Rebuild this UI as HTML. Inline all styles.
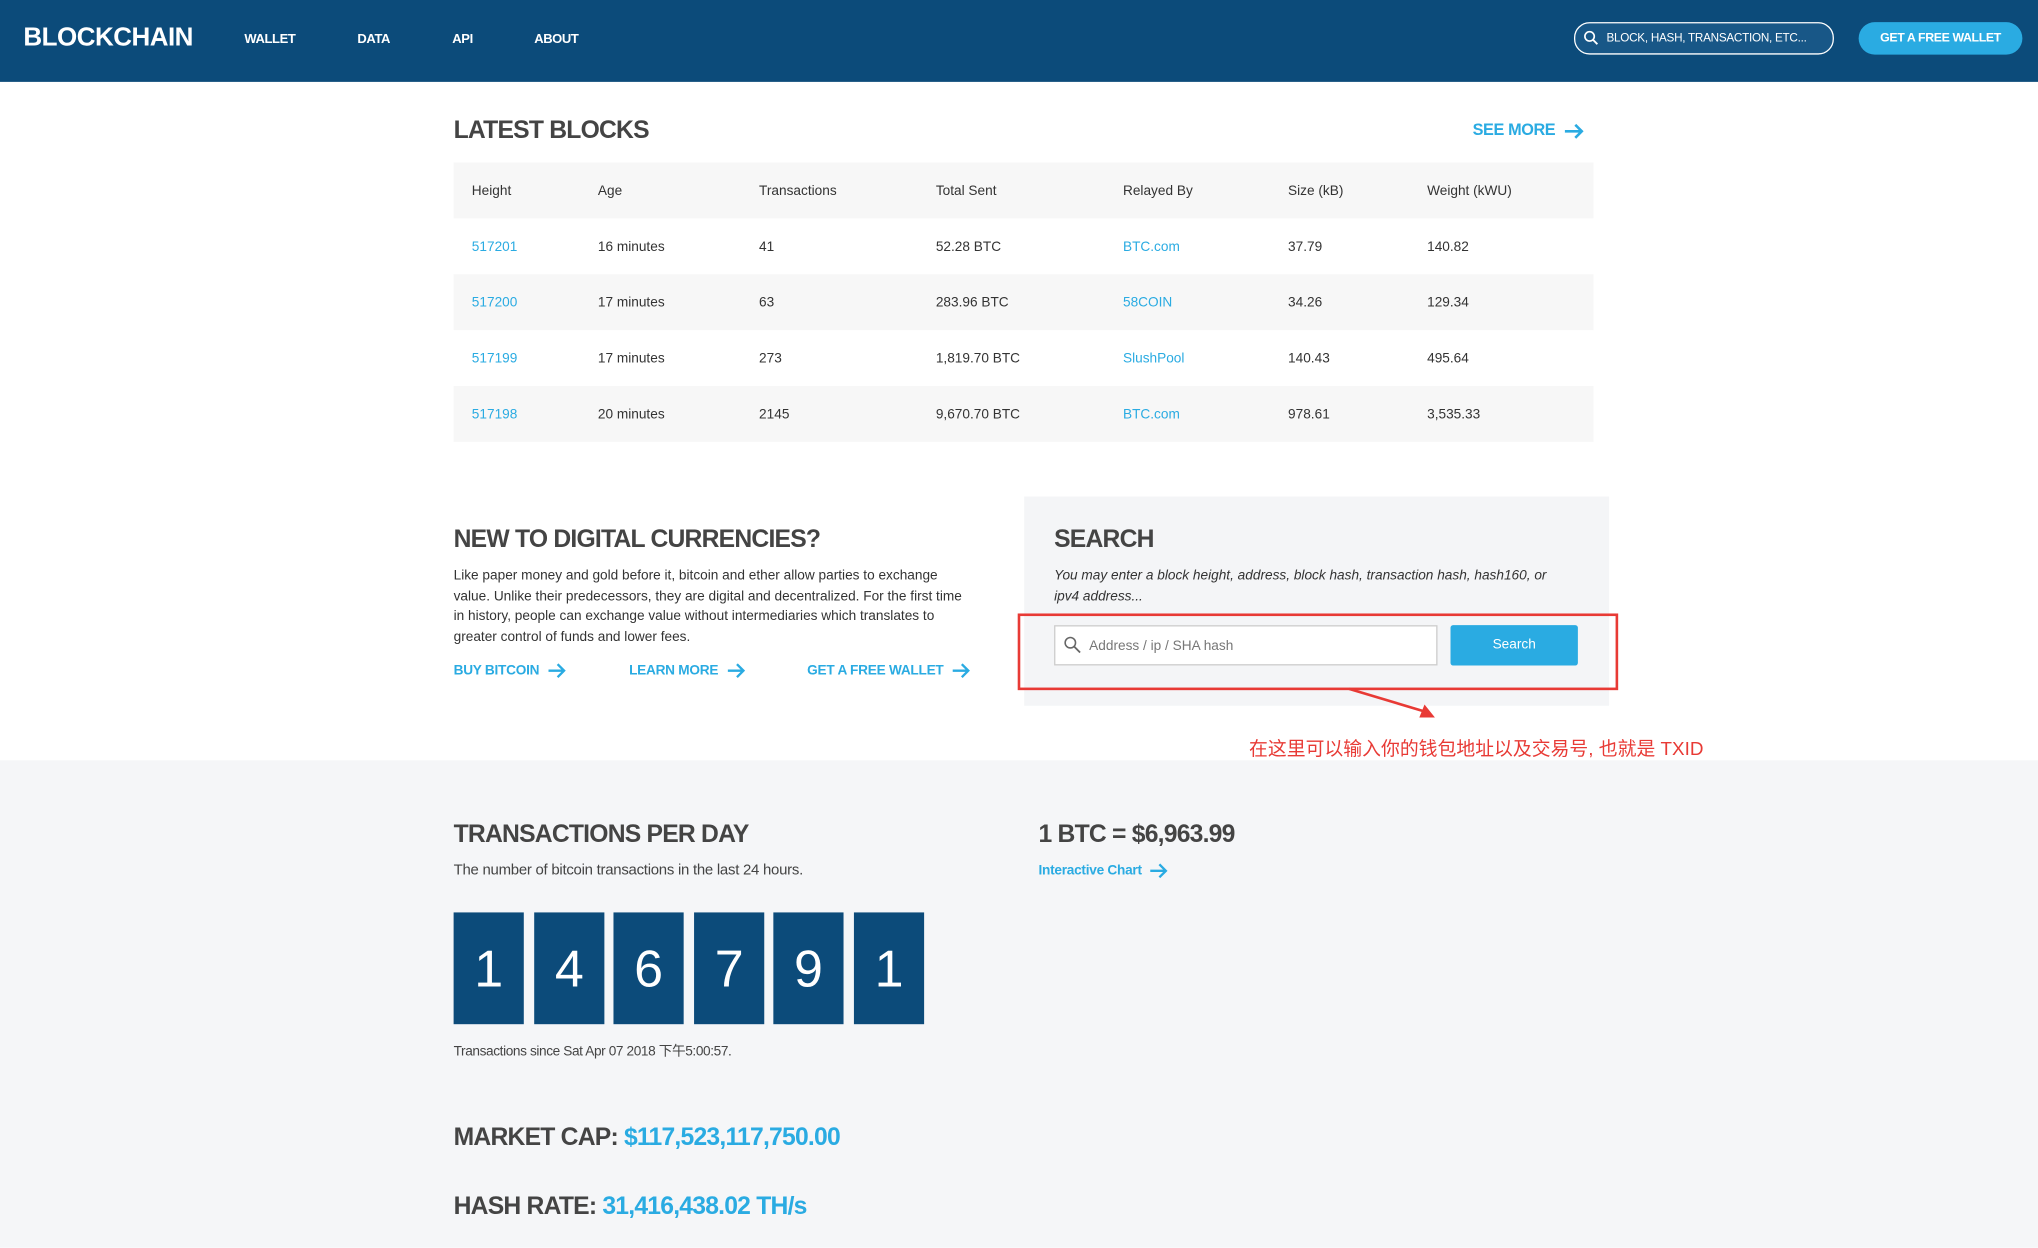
<!DOCTYPE html>
<html><head><meta charset="utf-8"><style>
html,body{margin:0;padding:0;width:2038px;height:1248px;overflow:hidden;background:#fff}
#w{position:absolute;left:0;top:0;width:1568px;height:960px;transform:scale(1.29974);transform-origin:0 0;font-family:"Liberation Sans","Noto Sans CJK SC",sans-serif;color:#333}
.a{position:absolute;white-space:nowrap}
.hd{left:0;top:0;width:1568px;height:63px;background:#0c4b7a}
.nav{color:#fff;font-weight:bold;font-size:10px;top:25px;letter-spacing:-.3px}
h2{margin:0;position:absolute;font-size:19px;color:#444;white-space:nowrap;letter-spacing:-.6px;font-weight:bold}
.blue{color:#2aabe2}
.lk{font-weight:bold;font-size:10.5px;color:#2aabe2;letter-spacing:-.2px}
.row{position:absolute;left:349px;width:877px;height:43px;font-size:10.5px}
.row span{position:absolute;top:16px}
.g{background:#f7f7f7}
.dg{position:absolute;top:702px;width:54px;height:86px;background:#0c4b7a;color:#fff;font-size:40px;text-align:center;line-height:88px}
.arr{display:inline-block;vertical-align:middle;margin-left:6px}
</style></head><body><div id="w">
<div class="a hd"></div>
<div class="a" style="left:18px;top:18px;color:#fff;font-weight:bold;font-size:20px;letter-spacing:-.4px">BLOCKCHAIN</div>
<div class="a nav" style="left:188px">WALLET</div>
<div class="a nav" style="left:275px">DATA</div>
<div class="a nav" style="left:348px">API</div>
<div class="a nav" style="left:411px">ABOUT</div>
<div class="a" style="left:1211px;top:17px;width:198px;height:23px;border:1px solid #fff;border-radius:12px;background:#185787"></div>
<svg class="a" style="left:1218px;top:23px" width="12" height="12" viewBox="0 0 12 12"><circle cx="5" cy="5" r="3.6" fill="none" stroke="#fff" stroke-width="1.3"/><path d="M7.6 7.6 11 11" stroke="#fff" stroke-width="1.4"/></svg>
<div class="a" style="left:1236px;top:24px;color:#fff;font-size:9px;letter-spacing:-.2px">BLOCK, HASH, TRANSACTION, ETC...</div>
<div class="a" style="left:1430px;top:17px;width:126px;height:25px;border-radius:13px;background:#2aabe2;color:#fff;font-weight:bold;font-size:9.5px;text-align:center;line-height:25px;letter-spacing:-.3px">GET A FREE WALLET</div>

<h2 style="left:349px;top:90px">LATEST BLOCKS</h2>
<div class="a" style="left:1133px;top:93px;font-weight:bold;font-size:12.5px;color:#2aabe2;letter-spacing:-.3px">SEE MORE<svg class="arr" width="16" height="12" viewBox="0 0 16 12"><path d="M1 6h13M9 1l5 5-5 5" fill="none" stroke="#2aabe2" stroke-width="2"/></svg></div>

<div class="row g" style="top:125px"><span style="left:14px">Height</span><span style="left:111px">Age</span><span style="left:235px">Transactions</span><span style="left:371px">Total Sent</span><span style="left:515px">Relayed By</span><span style="left:642px">Size (kB)</span><span style="left:749px">Weight (kWU)</span></div>
<div class="row" style="top:168px"><span class="blue" style="left:14px">517201</span><span style="left:111px">16 minutes</span><span style="left:235px">41</span><span style="left:371px">52.28 BTC</span><span class="blue" style="left:515px">BTC.com</span><span style="left:642px">37.79</span><span style="left:749px">140.82</span></div>
<div class="row g" style="top:211px"><span class="blue" style="left:14px">517200</span><span style="left:111px">17 minutes</span><span style="left:235px">63</span><span style="left:371px">283.96 BTC</span><span class="blue" style="left:515px">58COIN</span><span style="left:642px">34.26</span><span style="left:749px">129.34</span></div>
<div class="row" style="top:254px"><span class="blue" style="left:14px">517199</span><span style="left:111px">17 minutes</span><span style="left:235px">273</span><span style="left:371px">1,819.70 BTC</span><span class="blue" style="left:515px">SlushPool</span><span style="left:642px">140.43</span><span style="left:749px">495.64</span></div>
<div class="row g" style="top:297px"><span class="blue" style="left:14px">517198</span><span style="left:111px">20 minutes</span><span style="left:235px">2145</span><span style="left:371px">9,670.70 BTC</span><span class="blue" style="left:515px">BTC.com</span><span style="left:642px">978.61</span><span style="left:749px">3,535.33</span></div>

<h2 style="left:349px;top:405px">NEW TO DIGITAL CURRENCIES?</h2>
<div class="a" style="left:349px;top:436px;width:395px;white-space:normal;font-size:10.5px;line-height:15.5px;color:#333">Like paper money and gold before it, bitcoin and ether allow parties to exchange value. Unlike their predecessors, they are digital and decentralized. For the first time in history, people can exchange value without intermediaries which translates to greater control of funds and lower fees.</div>
<div class="a lk" style="left:349px;top:510px">BUY BITCOIN<svg class="arr" width="15" height="12" viewBox="0 0 15 12"><path d="M1 6h12M8 1l5 5-5 5" fill="none" stroke="#2aabe2" stroke-width="1.8"/></svg></div>
<div class="a lk" style="left:484px;top:510px">LEARN MORE<svg class="arr" width="15" height="12" viewBox="0 0 15 12"><path d="M1 6h12M8 1l5 5-5 5" fill="none" stroke="#2aabe2" stroke-width="1.8"/></svg></div>
<div class="a lk" style="left:621px;top:510px">GET A FREE WALLET<svg class="arr" width="15" height="12" viewBox="0 0 15 12"><path d="M1 6h12M8 1l5 5-5 5" fill="none" stroke="#2aabe2" stroke-width="1.8"/></svg></div>

<div class="a" style="left:788px;top:382px;width:450px;height:161px;background:#f4f5f7"></div>
<h2 style="left:811px;top:405px">SEARCH</h2>
<div class="a" style="left:811px;top:436px;width:400px;white-space:normal;font-size:10.5px;line-height:15.5px;font-style:italic;color:#333">You may enter a block height, address, block hash, transaction hash, hash160, or ipv4 address...</div>
<div class="a" style="left:811px;top:481px;width:293px;height:29px;background:#fff;border:1px solid #ccc"></div>
<svg class="a" style="left:818px;top:489px" width="14" height="14" viewBox="0 0 14 14"><circle cx="5.5" cy="5.5" r="4" fill="none" stroke="#666" stroke-width="1.2"/><path d="M8.5 8.5 13 13" stroke="#666" stroke-width="1.4"/></svg>
<div class="a" style="left:838px;top:491px;font-size:10.5px;color:#777">Address / ip / SHA hash</div>
<div class="a" style="left:1116px;top:481px;width:98px;height:31px;background:#2aabe2;border-radius:2px;color:#fff;font-size:10.5px;text-align:center;line-height:31px">Search</div>
<div class="a" style="left:783px;top:472px;width:458px;height:55px;border:2px solid #e83a35"></div>
<svg class="a" style="left:1030px;top:528px" width="80" height="28" viewBox="0 0 80 28"><path d="M8 2 68 20" stroke="#e83a35" stroke-width="2"/><path d="M74 24 62 24 66 14Z" fill="#e83a35"/></svg>
<div class="a" style="left:961px;top:565px;font-size:14.5px;color:#e83a35">在这里可以输入你的钱包地址以及交易号, 也就是 TXID</div>

<div class="a" style="left:0;top:585px;width:1568px;height:375px;background:#f5f6f8"></div>
<h2 style="left:349px;top:632px">TRANSACTIONS PER DAY</h2>
<div class="a" style="left:349px;top:664px;font-size:11.5px;color:#444;letter-spacing:-.2px">The number of bitcoin transactions in the last 24 hours.</div>
<div class="dg" style="left:349px">1</div><div class="dg" style="left:411px">4</div><div class="dg" style="left:472px">6</div><div class="dg" style="left:534px">7</div><div class="dg" style="left:595px">9</div><div class="dg" style="left:657px">1</div>
<div class="a" style="left:349px;top:801px;font-size:10.5px;color:#444;letter-spacing:-.3px">Transactions since Sat Apr 07 2018 下午5:00:57.</div>
<h2 style="left:799px;top:632px">1 BTC = $6,963.99</h2>
<div class="a lk" style="left:799px;top:664px">Interactive Chart<svg class="arr" width="15" height="12" viewBox="0 0 15 12"><path d="M1 6h12M8 1l5 5-5 5" fill="none" stroke="#2aabe2" stroke-width="1.8"/></svg></div>
<h2 style="left:349px;top:865px">MARKET CAP: <span class="blue">$117,523,117,750.00</span></h2>
<h2 style="left:349px;top:918px">HASH RATE: <span class="blue">31,416,438.02 TH/s</span></h2>
</div></body></html>
